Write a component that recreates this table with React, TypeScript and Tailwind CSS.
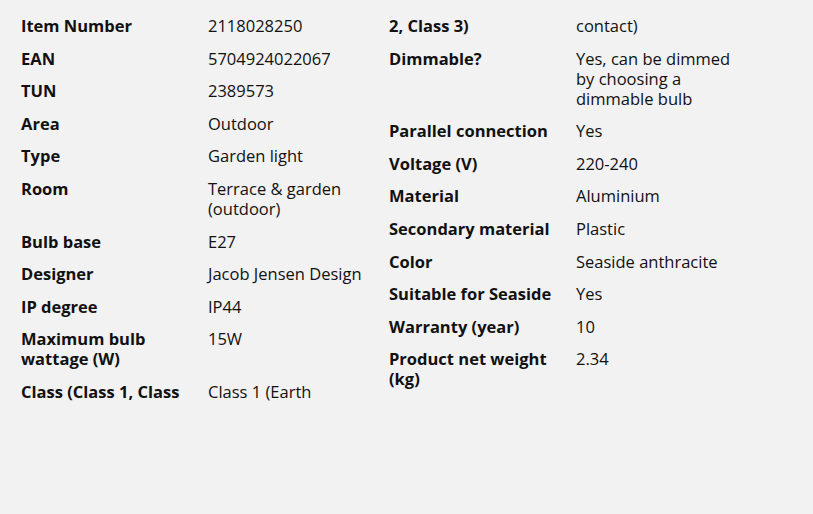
import React from 'react';

type Spec = { label: string[]; value: string[] };

const leftSpecs: Spec[] = [
  { label: ['Item Number'], value: ['2118028250'] },
  { label: ['EAN'], value: ['5704924022067'] },
  { label: ['TUN'], value: ['2389573'] },
  { label: ['Area'], value: ['Outdoor'] },
  { label: ['Type'], value: ['Garden light'] },
  { label: ['Room'], value: ['Terrace & garden', '(outdoor)'] },
  { label: ['Bulb base'], value: ['E27'] },
  { label: ['Designer'], value: ['Jacob Jensen Design'] },
  { label: ['IP degree'], value: ['IP44'] },
  { label: ['Maximum bulb', 'wattage (W)'], value: ['15W'] },
  { label: ['Class (Class 1, Class'], value: ['Class 1 (Earth'] },
];

const rightSpecs: Spec[] = [
  { label: ['2, Class 3)'], value: ['contact)'] },
  { label: ['Dimmable?'], value: ['Yes, can be dimmed', 'by choosing a', 'dimmable bulb'] },
  { label: ['Parallel connection'], value: ['Yes'] },
  { label: ['Voltage (V)'], value: ['220-240'] },
  { label: ['Material'], value: ['Aluminium'] },
  { label: ['Secondary material'], value: ['Plastic'] },
  { label: ['Color'], value: ['Seaside anthracite'] },
  { label: ['Suitable for Seaside'], value: ['Yes'] },
  { label: ['Warranty (year)'], value: ['10'] },
  { label: ['Product net weight', '(kg)'], value: ['2.34'] },
];

const SpecRow: React.FC<{ spec: Spec }> = ({ spec }) => (
  <div className="grid grid-cols-[187px_1fr] pb-[12.6px]">
    <dt className="font-bold whitespace-nowrap">
      {spec.label.map((line) => (
        <div key={line}>{line}</div>
      ))}
    </dt>
    <dd className="whitespace-nowrap">
      {spec.value.map((line) => (
        <div key={line}>{line}</div>
      ))}
    </dd>
  </div>
);

export default function App() {
  return (
    <div
      className="w-[813px] h-[514px] bg-[#f2f2f2] text-[#111111] text-[16.5px] leading-[20px] pl-[21px] pt-[16px] flex overflow-hidden"
      style={{ fontFamily: '"Open Sans", "Noto Sans", sans-serif' }}
    >
      <dl className="w-[368px] flex flex-col">
        {leftSpecs.map((s) => (
          <SpecRow key={s.label.join(' ')} spec={s} />
        ))}
      </dl>
      <dl className="w-[368px] flex flex-col">
        {rightSpecs.map((s) => (
          <SpecRow key={s.label.join(' ')} spec={s} />
        ))}
      </dl>
    </div>
  );
}
